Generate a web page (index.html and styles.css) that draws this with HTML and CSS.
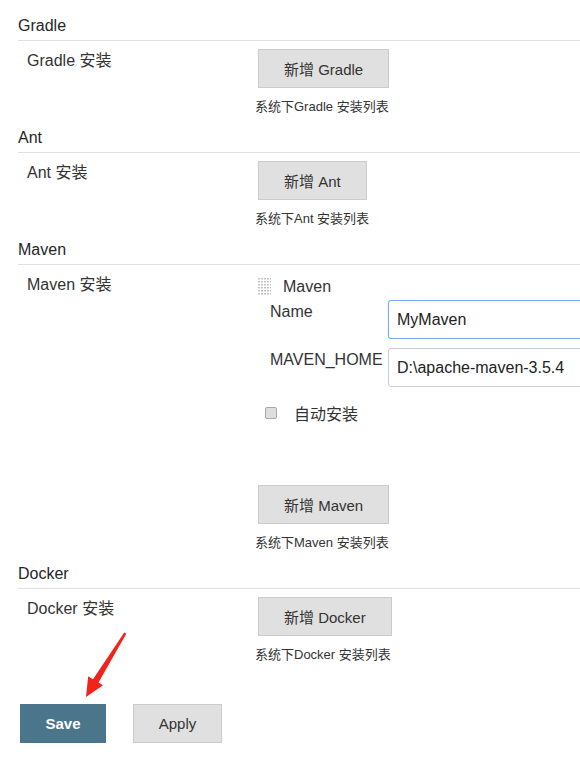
FILE: index.html
```html
<!DOCTYPE html>
<html lang="zh">
<head>
<meta charset="utf-8">
<title>Global Tool Configuration</title>
<link rel="stylesheet" href="styles.css">
</head>
<body>
<div class="page">
  <section class="section first">
    <div class="section-header">Gradle</div>
    <div class="row">
      <div class="row-label">Gradle 安装</div>
      <div class="row-control">
        <button class="btn" type="button">新增 Gradle</button>
        <div class="desc">系统下Gradle 安装列表</div>
      </div>
    </div>
  </section>

  <section class="section">
    <div class="section-header">Ant</div>
    <div class="row">
      <div class="row-label">Ant 安装</div>
      <div class="row-control">
        <button class="btn" type="button">新增 Ant</button>
        <div class="desc">系统下Ant 安装列表</div>
      </div>
    </div>
  </section>

  <section class="section">
    <div class="section-header">Maven</div>
    <div class="row">
      <div class="row-label">Maven 安装</div>
      <div class="row-control">
        <div class="repeated">
          <div class="repeated-head">
            <svg class="grip" width="13" height="17" viewBox="0 0 13 17" aria-hidden="true">
              <defs>
                <pattern id="dots" width="3" height="3" patternUnits="userSpaceOnUse">
                  <rect x="0" y="0" width="2" height="1" fill="#c4c4c4"/>
                  <rect x="0" y="1" width="2" height="1" fill="#e0e0e0"/>
                </pattern>
              </defs>
              <rect x="0" y="0" width="13" height="17" fill="url(#dots)"/>
            </svg>
            <span>Maven</span>
          </div>
          <div class="field">
            <label class="field-label">Name</label>
            <input class="text-input focused" type="text" value="MyMaven">
          </div>
          <div class="field">
            <label class="field-label">MAVEN_HOME</label>
            <input class="text-input" type="text" value="D:\apache-maven-3.5.4">
          </div>
          <div class="check-row">
            <span class="checkbox"></span>
            <span>自动安装</span>
          </div>
        </div>
        <button class="btn" type="button">新增 Maven</button>
        <div class="desc">系统下Maven 安装列表</div>
      </div>
    </div>
  </section>

  <section class="section">
    <div class="section-header">Docker</div>
    <div class="row">
      <div class="row-label">Docker 安装</div>
      <div class="row-control">
        <button class="btn" type="button">新增 Docker</button>
        <div class="desc">系统下Docker 安装列表</div>
      </div>
    </div>
  </section>

  <div class="form-buttons">
    <button class="btn btn-primary" type="button">Save</button>
    <button class="btn btn-apply" type="button">Apply</button>
  </div>

  <svg class="annotation" width="580" height="757" viewBox="0 0 580 757" aria-hidden="true">
    <polygon points="124.3,632.5 126.3,633.8 98.5,682.5 103,685.3 86,697 88.2,676.2 93,679.3" fill="#f2231a"/>
  </svg>
</div>
</body>
</html>
```

FILE: styles.css
```css
html, body {
  margin: 0;
  padding: 0;
  overflow: hidden;
  background: #fff;
}

body {
  font-family: "Liberation Sans", Arial, "Noto Sans CJK SC", sans-serif;
  color: #333;
  font-size: 16px;
}

.page {
  position: relative;
  width: 580px;
  height: 757px;
  padding-left: 18px;
  box-sizing: border-box;
  overflow: hidden;
}

.section {
  padding-bottom: 12px;
}

.section.first {
  padding-top: 15px;
}

.section-header {
  font-size: 16px;
  line-height: 20px;
  color: #262626;
  padding-top: 1px;
  padding-bottom: 4px;
  border-bottom: 1px solid #e2e2e2;
}

.row {
  display: grid;
  grid-template-columns: 237px 1fr;
}

.row-label {
  padding-left: 9px;
  padding-top: 10px;
  line-height: 20px;
  font-size: 16px;
}

.row-control {
  padding-top: 8px;
  display: flex;
  flex-direction: column;
  align-items: flex-start;
  min-width: 0;
}

.btn {
  font-family: "Liberation Sans", Arial, "Noto Sans CJK SC", sans-serif;
  font-size: 15px;
  color: #333;
  height: 39px;
  padding: 0 25px 1px;
  background: #e0e0e0;
  border: 1px solid #cbcbcb;
  border-radius: 0;
  margin: 0 0 0 3px;
  cursor: pointer;
}

.desc {
  margin-top: 11px;
  font-size: 13px;
  line-height: 16px;
  color: #333;
}

.repeated {
  align-self: stretch;
  margin-bottom: 61px;
}

.repeated-head {
  display: flex;
  align-items: center;
  gap: 12px;
  height: 20px;
  margin-top: 3px;
  margin-left: 3px;
  line-height: 20px;
}

.repeated-head span {
  position: relative;
  top: 1px;
}

.grip {
  display: block;
  flex: none;
}

.field {
  display: grid;
  grid-template-columns: 118px 1fr;
  align-items: start;
  margin-top: 4px;
  padding-left: 15px;
  overflow: hidden;
}

.field + .field {
  margin-top: 9px;
}

.field-label {
  line-height: 20px;
  padding-top: 2px;
}

.text-input {
  width: 230px;
  height: 39px;
  box-sizing: border-box;
  border: 1px solid #cdcdcd;
  border-radius: 3px;
  padding: 0 8px;
  font-family: "Liberation Sans", Arial, sans-serif;
  font-size: 16px;
  color: #222;
  background: #fff;
  outline: none;
}

.text-input.focused {
  border-color: #7ea8ee;
  box-shadow: 0 0 1px #9dbdf3;
}

.check-row {
  display: flex;
  align-items: center;
  gap: 17px;
  margin-top: 18px;
  margin-bottom: -1px;
  padding-left: 10px;
  line-height: 20px;
}

.checkbox {
  display: block;
  width: 12px;
  height: 12px;
  box-sizing: border-box;
  border: 1px solid #a9a9a9;
  border-radius: 2px;
  background: #dedede;
  margin-top: -5px;
}

.form-buttons {
  display: flex;
  gap: 27px;
  margin-top: 29px;
  padding-left: 2px;
}

.form-buttons .btn {
  margin: 0;
}

.btn-primary {
  width: 86px;
  padding: 0;
  background: #4b758b;
  border-color: #4b758b;
  color: #fff;
  font-weight: bold;
}

.btn-apply {
  width: 89px;
  padding: 0;
}

.annotation {
  position: absolute;
  left: 0;
  top: 0;
  pointer-events: none;
}
```
